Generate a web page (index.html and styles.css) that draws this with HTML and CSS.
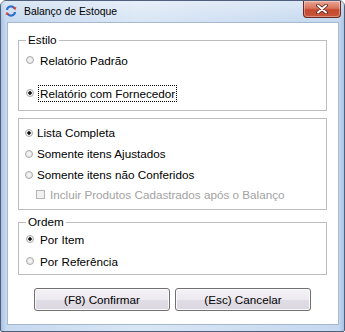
FILE: index.html
```html
<!DOCTYPE html>
<html lang="pt-BR">
<head>
    <meta charset="UTF-8">
    <title>Balanço de Estoque</title>
    <link rel="stylesheet" href="styles.css">
</head>
<body>
    <div class="window">
        <div class="titlebar">
            <svg class="app-icon" width="12" height="12" viewBox="0 0 12 12">
                <path d="M2 5 A4 4 0 0 1 9.5 3.5" fill="none" stroke="#2f6fcf" stroke-width="2.2"/>
                <path d="M10 7 A4 4 0 0 1 2.5 8.5" fill="none" stroke="#2f6fcf" stroke-width="2.2"/>
                <path d="M8 1.5 L11.5 2.5 L10 5.5 Z" fill="#d8412b"/>
                <path d="M4 10.5 L0.5 9.5 L2 6.5 Z" fill="#d8412b"/>
            </svg>
            <span class="title">Balanço de Estoque</span>
            <div class="close-btn">
                <svg width="12" height="10" viewBox="0 0 12 10">
                    <path d="M2 1.5 L10 8.5 M10 1.5 L2 8.5" stroke="#5a1d14" stroke-width="3.6" stroke-linecap="round"/>
                    <path d="M2 1.5 L10 8.5 M10 1.5 L2 8.5" stroke="#fff" stroke-width="2" stroke-linecap="round"/>
                </svg>
            </div>
        </div>

        <div class="client">
            <fieldset class="group group-estilo">
                <legend>Estilo</legend>
                <label class="opt"><span class="radio"></span><span class="text">Relatório Padrão</span></label>
                <label class="opt focused"><span class="radio checked"></span><span class="text">Relatório com Fornecedor</span></label>
            </fieldset>

            <fieldset class="group group-lista">
                <label class="opt"><span class="radio checked"></span><span class="text">Lista Completa</span></label>
                <label class="opt"><span class="radio"></span><span class="text">Somente itens Ajustados</span></label>
                <label class="opt"><span class="radio"></span><span class="text">Somente itens não Conferidos</span></label>
                <label class="opt disabled"><span class="check"></span><span class="text">Incluir Produtos Cadastrados após o Balanço</span></label>
            </fieldset>

            <fieldset class="group group-ordem">
                <legend>Ordem</legend>
                <label class="opt"><span class="radio checked"></span><span class="text">Por Item</span></label>
                <label class="opt"><span class="radio"></span><span class="text">Por Referência</span></label>
            </fieldset>

            <div class="actions">
                <button type="button" class="btn">(F8) Confirmar</button>
                <button type="button" class="btn">(Esc) Cancelar</button>
            </div>
        </div>
    </div>
</body>
</html>
```

FILE: styles.css
```css
html, body {
    margin: 0;
    padding: 0;
    background: #fff;
}

body {
    font-family: "Liberation Sans", Arial, sans-serif;
    font-size: 11.7px;
    color: #000;
}

.window {
    width: 345px;
    height: 332px;
    box-sizing: border-box;
    border: 1px solid #50607a;
    border-radius: 6px 6px 2px 2px;
    background: linear-gradient(to right, #a9c3e4 0, #c6d9ef 5px, #d9e6f5 40%, #cfdff2 70%, #c4d8ef calc(100% - 5px), #a9c3e4 100%);
    display: flex;
    flex-direction: column;
}

/* Title bar */
.titlebar {
    height: 21px;
    display: flex;
    align-items: flex-start;
    background: linear-gradient(to bottom, rgba(255,255,255,0.35), rgba(255,255,255,0) 21px);
}

.app-icon {
    margin: 4px 0 0 4px;
    flex-shrink: 0;
}

.title {
    margin: 4px 0 0 7px;
    font-size: 10.4px;
    line-height: 13px;
    color: #000;
}

.close-btn {
    margin-left: auto;
    margin-right: 3px;
    width: 38px;
    height: 17px;
    box-sizing: border-box;
    border: 1px solid #6b2a20;
    border-top: none;
    border-radius: 0 0 4px 4px;
    background: linear-gradient(to bottom, #e9a797 0, #d9735b 45%, #c44a2f 55%, #c8553a 100%);
    box-shadow: inset 0 0 0 1px rgba(255,255,255,0.35);
    display: flex;
    align-items: center;
    justify-content: center;
}

/* Client area */
.client {
    flex: 1;
    margin: 0 5px 6px 6px;
    border: 1px solid #a5b8ce;
    background: #fff;
    padding: 10px 11px 0 10px;
    display: flex;
    flex-direction: column;
}

.group {
    margin: 0;
    min-width: 0;
    border: 1px solid #bcbcbc;
    padding: 0 6px 0 7px;
}

.group legend {
    padding: 0 2px;
    line-height: 14px;
}

.opt {
    display: flex;
    align-items: center;
    gap: 4px;
}

.opt .text {
    border: 1px dotted transparent;
    padding: 0 1px;
    line-height: 15px;
}

.opt.focused .text {
    border-color: #000;
}

.opt.disabled {
    color: #a2a2a2;
}

.radio {
    width: 8px;
    height: 8px;
    box-sizing: border-box;
    border: 1px solid #a8a8a8;
    border-radius: 50%;
    background: radial-gradient(circle, #f7f7f7 0, #e2e2e2 100%);
    flex-shrink: 0;
}

.radio.checked {
    background: radial-gradient(circle, #111 0, #111 1.4px, #f2f2f2 2.1px);
}

.check {
    width: 9px;
    height: 9px;
    box-sizing: border-box;
    border: 1px solid #b5b5b5;
    background: #f1f1f1;
    flex-shrink: 0;
}

/* Estilo */
.group-estilo {
    padding-top: 5px;
    padding-bottom: 9px;
}

.group-estilo .opt {
    height: 16px;
}

.group-estilo .opt + .opt {
    margin-top: 17px;
}

/* Lista */
.group-lista {
    margin-top: 7px;
    padding: 3px 6px 5px 6px;
}

.group-lista .opt {
    height: 21px;
    gap: 2px;
}

.group-lista .opt.disabled {
    height: 19px;
    padding-left: 11px;
    gap: 3px;
}

/* Ordem */
.group-ordem {
    margin-top: 5px;
    padding-top: 2px;
    padding-bottom: 5px;
}

.group-ordem .opt {
    height: 16px;
}

.group-ordem .opt + .opt {
    margin-top: 6px;
}

/* Buttons */
.actions {
    margin-top: 13px;
    display: flex;
    justify-content: center;
    gap: 5px;
}

.btn {
    width: 136px;
    height: 23px;
    font-family: "Liberation Sans", Arial, sans-serif;
    font-size: 11.7px;
    color: #000;
    border: 1px solid #707070;
    border-radius: 3px;
    background: linear-gradient(to bottom, #f4f2f7 0, #ece9f0 50%, #e1dde7 51%, #dcd8e2 100%);
    box-shadow: inset 0 0 0 1px #fbfbfd;
    padding: 0;
}
```
